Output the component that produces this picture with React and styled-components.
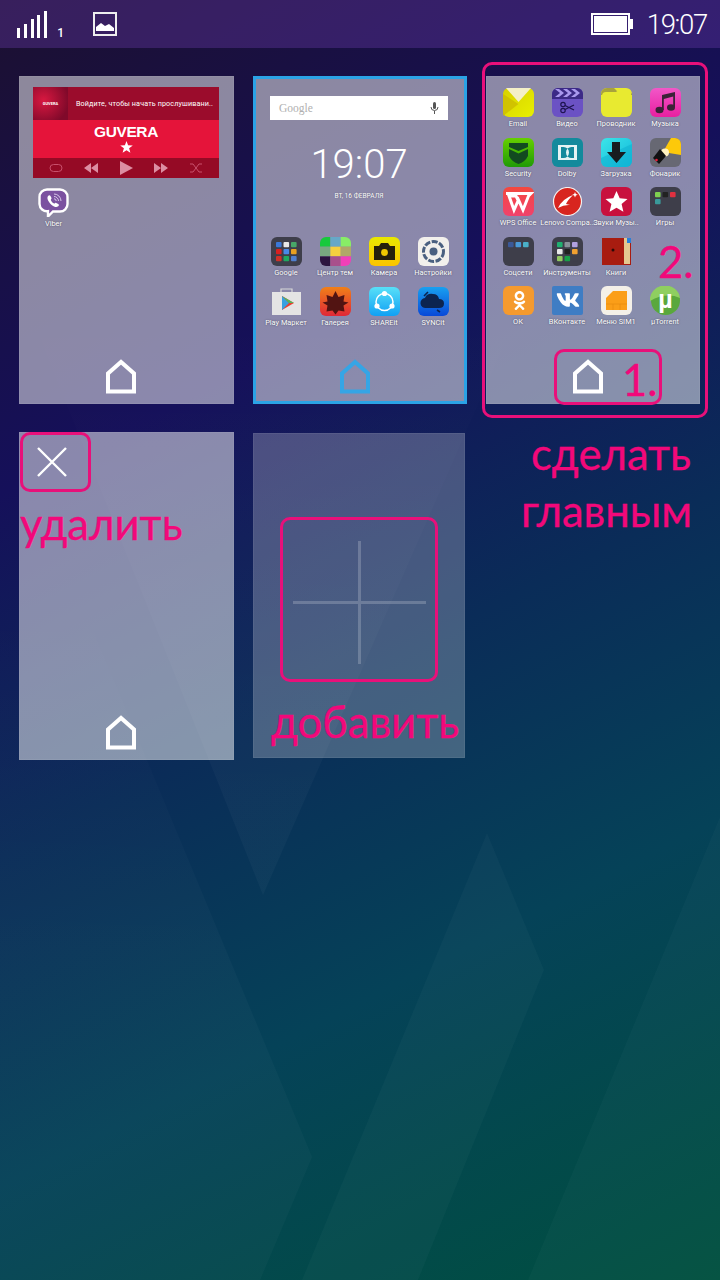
import React from 'react';
import styled, { createGlobalStyle } from 'styled-components';
import { FaVk, FaOdnoklassniki } from 'react-icons/fa';

const Global = createGlobalStyle`
  html, body { margin: 0; padding: 0; background: #12105a; }
  * { box-sizing: border-box; }
`;

const Page = styled.div`
  position: relative;
  width: 720px;
  height: 1280px;
  overflow: hidden;
  font-family: Roboto, "Liberation Sans", sans-serif;
  background: linear-gradient(153deg, #1c1030 0%, #15105a 30%, #0a2c58 52%, #054258 72%, #00503f 100%);
`;
const Backdrop = styled.svg`
  position: absolute;
  inset: 0;
  width: 720px;
  height: 1280px;
`;
const StatusBar = styled.header`
  position: relative;
  height: 48px;
  display: flex;
  align-items: center;
  padding: 0 13px 0 17px;
  color: #fff;
  background: rgba(112, 62, 180, 0.34);
`;
const Signal = styled.div`
  display: flex;
  align-items: flex-end;
  gap: 3.8px;
  height: 28px;
  margin-top: -1px;
`;
const SignalBar = styled.i`
  display: block;
  width: 3px;
  height: ${p => p.$h}px;
  background: #fff;
`;
const SimNumber = styled.span`
  font-size: 12px;
  font-weight: 500;
  margin: 17px 0 0 10px;
  width: 9px;
`;
const GalleryIcon = styled.svg`
  width: 24px;
  height: 24px;
  margin: -1px 0 0 27px;
`;
const StatusRight = styled.div`
  margin-left: auto;
  display: flex;
  align-items: center;
  gap: 14px;
`;
const Time = styled.span`
  font-size: 27.5px;
  font-weight: 300;
  line-height: 1;
  letter-spacing: -1.3px;
  margin-top: 2px;
`;
const Grid = styled.main`
  position: relative;
  display: grid;
  grid-template-columns: 215px 214px 214px;
  grid-auto-rows: 328px;
  column-gap: 19px;
  row-gap: 28px;
  padding: 28px 0 0 19px;
`;
const Card = styled.section`
  display: flex;
  flex-direction: column;
  min-width: 0;
  background: rgba(255, 255, 255, 0.5);
  box-shadow: inset 0 0 0 1px rgba(255, 255, 255, 0.06);
`;
const ActiveCard = styled(Card)`
  box-shadow: inset 0 0 0 3px #2ba3e6;
`;
const AddCard = styled(Card)`
  margin: 1px 2px 2px 0;
  align-items: center;
  justify-content: center;
  padding: 14px 0 0 0;
  background: rgba(255, 255, 255, 0.24);
`;
const HomeIcon = styled.svg`
  display: block;
  width: 32px;
  height: 35px;
  margin: auto 11px 10px 0;
  align-self: center;
  color: ${p => p.$color || '#fff'};
`;
const Widget = styled.div`
  margin: 11px 15px 0 14px;
  color: #fff;
`;
const WidgetHead = styled.div`
  display: flex;
  align-items: center;
  height: 33px;
  background: #9b0c2c;
`;
const Cover = styled.div`
  width: 35px;
  height: 33px;
  flex: none;
  display: flex;
  align-items: center;
  justify-content: center;
  font-size: 4px;
  font-weight: 700;
  background: radial-gradient(circle at 30% 40%, #d81840, #80092a 80%);
`;
const WidgetTitle = styled.span`
  margin-left: 8px;
  font-size: 7.2px;
  letter-spacing: 0.12px;
  white-space: nowrap;
  overflow: hidden;
`;
const WidgetBody = styled.div`
  height: 38px;
  display: flex;
  flex-direction: column;
  align-items: center;
  justify-content: center;
  gap: 2px;
  background: #e5143a;
`;
const Brand = styled.b`
  font-family: "Liberation Sans", sans-serif;
  font-size: 15.5px;
  line-height: 14px;
  letter-spacing: -0.4px;
`;
const BrandStar = styled.svg`
  width: 13px;
  height: 12px;
`;
const WidgetControls = styled.div`
  height: 20px;
  display: flex;
  align-items: center;
  justify-content: space-around;
  padding: 0 6px;
  background: #950a25;
  color: #dc8ea2;
`;
const ControlIcon = styled.svg`
  width: 16px;
  height: 14px;
`;
const AppRow = styled.div`
  display: grid;
  grid-template-columns: repeat(4, 49px);
  grid-auto-rows: ${p => p.$row || 49.5}px;
  padding: ${p => p.$pad || '12px 0 0 7.5px'};
`;
const AppCell = styled.div`
  display: flex;
  flex-direction: column;
  align-items: center;
  min-width: 0;
`;
const AppIcon = styled.svg`
  display: block;
  width: 31px;
  height: 29px;
  flex: none;
`;
const AppLabel = styled.span`
  margin-top: 2px;
  font-size: 7.4px;
  line-height: 10px;
  color: #fff;
  white-space: nowrap;
  text-shadow: 0 0 1.5px rgba(40, 40, 60, 0.8);
`;
const SearchBar = styled.div`
  display: flex;
  align-items: center;
  justify-content: space-between;
  height: 24px;
  margin: 20px 19px 0 17px;
  padding: 0 9px 0 9px;
  background: #fff;
  color: #b0b0b0;
  font-size: 11.5px;
  font-family: "Liberation Serif", serif;
`;
const Mic = styled.svg`
  width: 9px;
  height: 12px;
`;
const ClockBlock = styled.div`
  display: flex;
  flex-direction: column;
  align-items: center;
  color: #fff;
  margin-right: 2px;
`;
const ClockTime = styled.div`
  font-size: 40px;
  font-weight: 300;
  line-height: 46px;
  margin-top: 22px;
`;
const ClockDate = styled.div`
  font-size: 6.6px;
  line-height: 10px;
  margin-top: 3px;
  text-shadow: 0 0 1px rgba(40, 40, 60, 0.6);
`;
const CloseIcon = styled.svg`
  width: 30px;
  height: 30px;
  margin: 15px 0 0 18px;
  flex: none;
`;
const PlusIcon = styled.svg`
  width: 133px;
  height: 123px;
`;
const Mark = styled.div`
  position: absolute;
  left: ${p => p.$x}px;
  top: ${p => p.$y}px;
  width: ${p => p.$w}px;
  height: ${p => p.$h}px;
  border: 3px solid #e8107a;
  border-radius: 10px;
`;
const Note = styled.div`
  position: absolute;
  left: ${p => p.$x}px;
  top: ${p => p.$y}px;
  font-family: Lato, "Open Sans", sans-serif;
  font-size: 43.6px;
  line-height: 50px;
  color: #f2087a;
  -webkit-text-stroke: 0.3px #f2087a;
  white-space: nowrap;
`;

const Home = ({ color }) => (
  <HomeIcon $color={color} viewBox="0 0 32 35">
    <path d="M3 32.5V14.5L16 3l13 11.5v18z" fill="none" stroke="currentColor" strokeWidth="4" />
  </HomeIcon>
);

const Grad = ({ id, a, b, v }) => (
  <defs>
    <linearGradient id={id} x1="0" y1="0" x2={v ? 0 : 1} y2="1">
      <stop offset="0" stopColor={a} />
      <stop offset="1" stopColor={b} />
    </linearGradient>
  </defs>
);
const Base = ({ fill, rx = 6 }) => <rect width="31" height="29" rx={rx} fill={fill} />;
const Minis = ({ colors }) => (
  <g>
    {colors.map((c, i) => (
      <rect key={i} x={5 + (i % 3) * 7.5} y={5 + Math.floor(i / 3) * 7} width="5.6" height="5.2" rx="1" fill={c} />
    ))}
  </g>
);
const FOLDER = '#3e3e4a';

const ICONS = {
  email: (
    <>
      <Grad id="gEmail" a="#d8d000" b="#e8f000" />
      <Base fill="url(#gEmail)" />
      <path d="M3 0h25l-12.5 14z" fill="#f4efc8" />
      <path d="M0 6l15.5 10L0 28z" fill="#cdbb00" opacity=".8" />
    </>
  ),
  video: (
    <>
      <Base fill="#6b52c4" />
      <path d="M0 6a6 6 0 0 1 6-6h19a6 6 0 0 1 6 6v5H0z" fill="#3c2a86" />
      <path d="M3 1l5 4-5 4h4l5-4-5-4zm8 0l5 4-5 4h4l5-4-5-4zm8 0l5 4-5 4h4l5-4-5-4z" fill="#a998ee" />
      <circle cx="11" cy="16.5" r="2.2" fill="none" stroke="#1e1450" strokeWidth="1.2" />
      <circle cx="11" cy="22.5" r="2.2" fill="none" stroke="#1e1450" strokeWidth="1.2" />
      <path d="M13 17.5l9 4.5M13 21.5l9-4.5" stroke="#1e1450" strokeWidth="1.2" />
    </>
  ),
  files: (
    <>
      <Base fill="#e8ea30" />
      <path d="M0 7V6a6 6 0 0 1 6-6h7l3 3h9a6 6 0 0 1 6 3v1z" fill="#a8a23c" />
      <path d="M1 8q0-4 4-4h10l4-3h7q4 0 4 4v19q0 4-4 4H5q-4 0-4-4z" fill="#e8ea30" />
    </>
  ),
  music: (
    <>
      <Grad id="gMusic" a="#f257c8" b="#e81fa0" v />
      <Base fill="url(#gMusic)" />
      <path d="M12 7l13-3v15h-1.800V8.500L13.800 11v11H12z" fill="#3c2238" />
      <ellipse cx="9.500" cy="22" rx="4" ry="3.200" fill="#3c2238" />
      <ellipse cx="21" cy="19.500" rx="4" ry="3.200" fill="#3c2238" />
    </>
  ),
  security: (
    <>
      <Grad id="gSec" a="#66d000" b="#1f9a06" v />
      <Base fill="url(#gSec)" />
      <path d="M6 5h19v4l-9.500 4L6 9zM6 11l9.500 4.500L25 11v7q-3 6-9.500 8Q9 24 6 18z" fill="#124a20" />
    </>
  ),
  dolby: (
    <>
      <Base fill="#138a9c" />
      <rect x="6" y="7" width="19" height="15" fill="#e4f4f4" />
      <path d="M9 9h2.500a5.500 5.500 0 0 1 0 11H9zM22 9h-2.500a5.500 5.500 0 0 0 0 11H22z" fill="#138a9c" />
    </>
  ),
  download: (
    <>
      <Grad id="gDown" a="#3ce4e8" b="#10b8dc" />
      <Base fill="url(#gDown)" />
      <path d="M0 20L31 6v17a6 6 0 0 1-6 6H6a6 6 0 0 1-6-6z" fill="#0fb0d0" opacity=".55" />
      <path d="M11 4h8v10h6L15.500 25 6 14h5z" fill="#181c20" />
    </>
  ),
  torch: (
    <>
      <Base fill="#676873" />
      <path d="M13 14L21 0h4a6 6 0 0 1 6 6v11z" fill="#fdc90a" />
      <circle cx="15" cy="14.500" r="4" fill="#fff2c0" />
      <path d="M10 11l6 7-7 8-6-6z" fill="#111" />
      <circle cx="6.500" cy="22" r="1.300" fill="#e8203a" />
    </>
  ),
  wps: (
    <>
      <Grad id="gWps" a="#f4483e" b="#f0426c" v />
      <Base fill="url(#gWps)" />
      <path d="M3 6.500h25l-2.500 2.500-5.500 14-4.500-10L11 23 6 9h7l3 6" fill="none" stroke="#fff" strokeWidth="3" />
    </>
  ),
  lenovo: (
    <>
      <circle cx="15.500" cy="14.500" r="14" fill="#d8251f" stroke="#f2f2f2" strokeWidth="1.200" />
      <path d="M6 21q4-9 15-13-6 6-7 9l4 1q-6-.500-12 3z" fill="#fff" />
      <path d="M23 5l.8 2 2 .8-2 .8-.8 2-.8-2-2-.8 2-.8z" fill="#fff" />
    </>
  ),
  zvuki: (
    <>
      <Base fill="#c8103e" />
      <path d="M15.500 4l3.200 7.200 7.800.8-5.900 5.100 1.800 7.700-6.900-4-6.900 4 1.800-7.700L4.500 12l7.800-.8z" fill="#fff" />
    </>
  ),
  games: (
    <>
      <Base fill={FOLDER} />
      <Minis colors={['#7fd050', '#222', '#e03040', '#3a9a9a']} />
    </>
  ),
  social: (
    <>
      <Base fill={FOLDER} />
      <Minis colors={['#3b5998', '#4a9ad8', '#4ab0c8']} />
    </>
  ),
  tools: (
    <>
      <Base fill={FOLDER} />
      <Minis colors={['#20b070', '#889098', '#b0a0e0', '#e8e8e8', '#202020', '#f0a030', '#90c860', '#18a048', '#3e3e4a']} />
    </>
  ),
  books: (
    <>
      <rect x="1" y="1" width="29" height="27" fill="#a81c10" />
      <rect x="23" y="1" width="6" height="26" fill="#e4c890" />
      <rect x="26" y="1" width="4" height="5" fill="#2a80d8" />
      <circle cx="12" cy="13" r="1.500" fill="#2a0a08" />
    </>
  ),
  ok: (
    <>
      <Base fill="#f59a2e" />
      <foreignObject x="7" y="5" width="17" height="19">
        <FaOdnoklassniki color="#fff" size={19} style={{ display: 'block' }} />
      </foreignObject>
    </>
  ),
  vk: (
    <>
      <Base fill="#3f7dc4" rx="2" />
      <foreignObject x="4" y="2" width="24" height="25">
        <FaVk color="#fff" size={24} style={{ display: 'block' }} />
      </foreignObject>
    </>
  ),
  sim: (
    <>
      <Base fill="#f4f0e8" />
      <path d="M5 12l7-7h14v19H5z" fill="#fb9e18" />
      <path d="M5 18h21M12 18v6M19 18v6" stroke="#e88a10" strokeWidth=".7" />
    </>
  ),
  torrent: (
    <>
      <circle cx="15.500" cy="14.500" r="14.500" fill="#5aa83c" />
      <path d="M0 15a15 14 0 0 1 30-3q-14-6-30 3z" fill="#8fcf60" />
      <text x="15.500" y="22" textAnchor="middle" fontFamily="Liberation Sans" fontWeight="700" fontSize="25" fill="#fff">µ</text>
    </>
  ),
  google: (
    <>
      <Base fill={FOLDER} />
      <Minis colors={['#3b78d8', '#e8e8e8', '#48a868', '#d82020', '#4888e8', '#e8a020', '#d03028', '#20a860', '#5080d0']} />
    </>
  ),
  themes: (
    <>
      <defs>
        <clipPath id="themesClip"><rect width="31" height="29" rx="6" /></clipPath>
      </defs>
      <g clipPath="url(#themesClip)">
        {['#17c93c', '#66a8c8', '#88ee66', '#78a880', '#f4d040', '#b0a868', '#2c1440', '#a8508c', '#f040b8'].map((c, i) => (
          <rect key={i} x={(i % 3) * 10.34} y={Math.floor(i / 3) * 9.67} width="10.400" height="9.700" fill={c} />
        ))}
      </g>
    </>
  ),
  camera: (
    <>
      <Grad id="gCam" a="#e8e800" b="#fcc400" v />
      <Base fill="url(#gCam)" />
      <path d="M5 9h5l2-3h7l2 3h5v14H5z" fill="#26200c" />
      <circle cx="15.500" cy="15.500" r="3.400" fill="#f0c800" />
    </>
  ),
  settings: (
    <>
      <Base fill="#f2f0ec" />
      <circle cx="15.500" cy="14.500" r="10" fill="none" stroke="#4a6080" strokeWidth="3" strokeDasharray="6 1.500" />
      <circle cx="15.500" cy="14.500" r="4" fill="#4a6080" />
    </>
  ),
  play: (
    <>
      <path d="M10 5V2h11v3" fill="none" stroke="#d8d8d8" strokeWidth="1.200" />
      <path d="M1 5h29v23H1z" fill="#e4e4e4" />
      <path d="M11 9l12 7-12 7z" fill="#e84030" />
      <path d="M11 9l7 7-7 7z" fill="#38a0e0" />
      <path d="M11 9l12 7-5 0z" fill="#50b860" />
    </>
  ),
  gallery: (
    <>
      <Grad id="gGal" a="#f08018" b="#e02838" v />
      <Base fill="url(#gGal)" />
      <path d="M15.500 4l3 6 6-2-1 6.500 5 1-5 3 1 6-6-1-3 4-3-4-6 1 1-6-5-3 5-1-1-6.500 6 2z" fill="#521412" />
    </>
  ),
  shareit: (
    <>
      <Grad id="gShare" a="#58e0f8" b="#10a0f4" v />
      <Base fill="url(#gShare)" />
      <circle cx="15.500" cy="15" r="8.500" fill="none" stroke="#fff" strokeWidth="1.500" />
      <circle cx="15.500" cy="6.500" r="2.600" fill="#fff" />
      <circle cx="8" cy="19" r="2.600" fill="#fff" />
      <circle cx="23" cy="19" r="2.600" fill="#fff" />
    </>
  ),
  syncit: (
    <>
      <Grad id="gSync" a="#18a0f0" b="#0848d8" v />
      <Base fill="url(#gSync)" />
      <path d="M8 21a5 5 0 0 1-1-10q2-5 8-4 5 0 6 5 5 0 5 4.500T21 21z" fill="#0c2450" />
      <path d="M6 9l4-4M19 23l3 2" stroke="#0c2450" strokeWidth="1.600" />
    </>
  ),
  viber: (
    <>
      <path d="M9 1.500h13a7.500 7.500 0 0 1 7.500 7.500v7a7.500 7.500 0 0 1-7.500 7.500h-7l-5 5v-5.300a7.500 7.500 0 0 1-8.500-7.200V9A7.500 7.500 0 0 1 9 1.500z" fill="#7b51a0" stroke="#fff" strokeWidth="2.400" />
      <path d="M10 8c1-1 2-1 2.500 0l1 2c.3.700-.7 1.500-.7 2 .500 1.500 2 3 3.400 3.600.5 0 1.300-1 2-.7l2 1c1 .6.800 1.600 0 2.400-1.800 1.600-4 .6-6.200-1C11.800 15.500 8 11 10 8z" fill="#fff" />
      <path d="M16 6a7 7 0 0 1 7 7M16 8.500a4.500 4.500 0 0 1 4.500 4.500M16 10.800a2.200 2.200 0 0 1 2.200 2.200" fill="none" stroke="#d8c8e8" strokeWidth="1" />
    </>
  ),
};

const App_ = ({ icon, label }) => (
  <AppCell>
    <AppIcon viewBox="0 0 31 29">{ICONS[icon]}</AppIcon>
    <AppLabel>{label}</AppLabel>
  </AppCell>
);

const HOME_APPS = [
  ['google', 'Google'], ['themes', 'Центр тем'], ['camera', 'Камера'], ['settings', 'Настройки'],
  ['play', 'Play Маркет'], ['gallery', 'Галерея'], ['shareit', 'SHAREit'], ['syncit', 'SYNCit'],
];
const THIRD_APPS = [
  ['email', 'Email'], ['video', 'Видео'], ['files', 'Проводник'], ['music', 'Музыка'],
  ['security', 'Security'], ['dolby', 'Dolby'], ['download', 'Загрузка'], ['torch', 'Фонарик'],
  ['wps', 'WPS Office'], ['lenovo', 'Lenovo Compa..'], ['zvuki', 'Звуки Музы..'], ['games', 'Игры'],
  ['social', 'Соцсети'], ['tools', 'Инструменты'], ['books', 'Книги'], null,
  ['ok', 'ОК'], ['vk', 'ВКонтакте'], ['sim', 'Меню SIM1'], ['torrent', 'µTorrent'],
];

export default function App() {
  return (
    <Page>
      <Global />
      <Backdrop viewBox="0 0 720 1280">
        <defs>
          <linearGradient id="fadeA" gradientUnits="userSpaceOnUse" x1="0" y1="300" x2="0" y2="800">
            <stop offset="0" stopColor="#fff" stopOpacity="0" />
            <stop offset="1" stopColor="#fff" stopOpacity=".028" />
          </linearGradient>
          <linearGradient id="fadeB" gradientUnits="userSpaceOnUse" x1="0" y1="600" x2="0" y2="950">
            <stop offset="0" stopColor="#fff" stopOpacity="0" />
            <stop offset="1" stopColor="#fff" stopOpacity=".024" />
          </linearGradient>
        </defs>
        <polygon points="-76,48 634,48 263,895" fill="url(#fadeA)" />
        <polygon points="0,407 312,1157 260,1280 0,1280" fill="url(#fadeB)" />
        <polygon points="487,833 544,970 418,1280 302,1280" fill="#fff" opacity=".028" />
        <polygon points="720,817 528,1280 720,1280" fill="#fff" opacity=".024" />
      </Backdrop>
      <StatusBar>
        <Signal>
          {[10, 14, 19, 23, 27].map(h => <SignalBar key={h} $h={h} />)}
        </Signal>
        <SimNumber>1</SimNumber>
        <GalleryIcon viewBox="0 0 24 24">
          <rect x="1" y="1" width="22" height="22" fill="none" stroke="#eee" strokeWidth="2" />
          <path d="M3 19v-4l5-4 4 3 4-2 5 4v3z" fill="#fff" />
        </GalleryIcon>
        <StatusRight>
          <svg width="42" height="22" viewBox="0 0 42 22">
            <rect x="1" y="1" width="37" height="20" fill="none" stroke="#fff" strokeWidth="2" />
            <rect x="3" y="3" width="33" height="16" fill="#fff" />
            <rect x="39" y="6" width="3" height="10" fill="#fff" />
          </svg>
          <Time>19:07</Time>
        </StatusRight>
      </StatusBar>
      <Grid>
        <Card>
          <Widget>
            <WidgetHead>
              <Cover>GUVERA</Cover>
              <WidgetTitle>Войдите, чтобы начать прослушивани..</WidgetTitle>
            </WidgetHead>
            <WidgetBody>
              <Brand>GUVERA</Brand>
              <BrandStar viewBox="0 0 13 12">
                <path d="M6.500 0l1.600 4.300 4.700.2-3.700 2.800 1.300 4.500-3.900-2.600-3.900 2.600 1.300-4.500L.2 4.500l4.700-.2z" fill="#fff" />
              </BrandStar>
            </WidgetBody>
            <WidgetControls>
              <ControlIcon viewBox="0 0 16 14">
                <rect x="2" y="3.500" width="12" height="7" rx="3.500" fill="none" stroke="#c8506c" />
              </ControlIcon>
              <ControlIcon viewBox="0 0 16 14"><path d="M8 2v10L1 7zM15 2v10L8 7z" fill="currentColor" /></ControlIcon>
              <ControlIcon viewBox="0 0 16 14"><path d="M2 0v14l13-7z" fill="currentColor" /></ControlIcon>
              <ControlIcon viewBox="0 0 16 14"><path d="M1 2v10l7-5zM8 2v10l7-5z" fill="currentColor" /></ControlIcon>
              <ControlIcon viewBox="0 0 16 14">
                <path d="M2 3h3l6 8h3M2 11h3l6-8h3" fill="none" stroke="#c8506c" />
              </ControlIcon>
            </WidgetControls>
          </Widget>
          <AppRow $pad="10px 0 0 10px">
            <App_ icon="viber" label="Viber" />
          </AppRow>
          <Home />
        </Card>
        <ActiveCard>
          <SearchBar>
            Google
            <Mic viewBox="0 0 9 12">
              <rect x="3" y="0" width="3" height="7" rx="1.500" fill="#555" />
              <path d="M1 5a3.500 3.500 0 0 0 7 0M4.500 9v3" fill="none" stroke="#555" />
            </Mic>
          </SearchBar>
          <ClockBlock>
            <ClockTime>19:07</ClockTime>
            <ClockDate>ВТ, 16 ФЕВРАЛЯ</ClockDate>
          </ClockBlock>
          <AppRow $pad="36px 0 0 8.5px">
            {HOME_APPS.map(([icon, label]) => <App_ key={label} icon={icon} label={label} />)}
          </AppRow>
          <Home color="#35a5e5" />
        </ActiveCard>
        <Card>
          <AppRow>
            {THIRD_APPS.map((a, i) => a ? <App_ key={a[1]} icon={a[0]} label={a[1]} /> : <AppCell key={i} />)}
          </AppRow>
          <Home />
        </Card>
        <Card>
          <CloseIcon viewBox="0 0 30 30">
            <path d="M1 1l28 28M29 1L1 29" stroke="#fff" strokeWidth="2.400" />
          </CloseIcon>
          <Home />
        </Card>
        <AddCard>
          <PlusIcon viewBox="0 0 133 123">
            <path d="M0 61.500h133M66.500 0v123" stroke="#fff" strokeOpacity=".2" strokeWidth="3" />
          </PlusIcon>
        </AddCard>
      </Grid>
      <Mark $x={482} $y={62} $w={226} $h={356} />
      <Mark $x={554} $y={349} $w={108} $h={56} />
      <Mark $x={20} $y={432} $w={71} $h={60} />
      <Mark $x={280} $y={517} $w={158} $h={165} />
      <Note $x={622} $y={354}>1.</Note>
      <Note $x={658} $y={236}>2.</Note>
      <Note $x={531} $y={428}>сделать</Note>
      <Note $x={521} $y={485}>главным</Note>
      <Note $x={20} $y={498}>удалить</Note>
      <Note $x={271} $y={696}>добавить</Note>
    </Page>
  );
}
